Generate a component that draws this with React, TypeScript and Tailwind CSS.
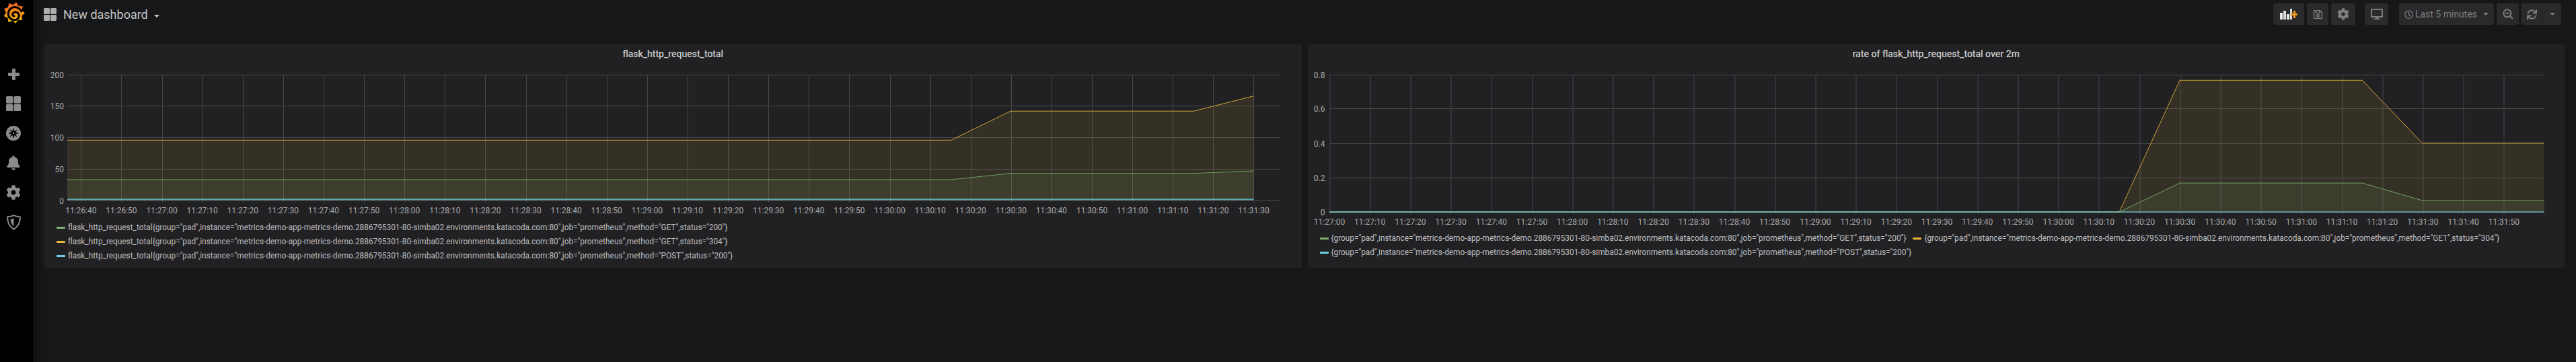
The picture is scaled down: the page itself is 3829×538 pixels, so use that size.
import React from "react";
import { FaBell, FaCog, FaDesktop, FaRegClock, FaRegSave, FaSync } from "react-icons/fa";

const pad = (n: number) => String(n).padStart(2, "0");
const timeLabel = (start: number, i: number) => {
  const s = start + i * 10;
  return `11:${pad(Math.floor(s / 60))}:${pad(s % 60)}`;
};

const pts = (a: number[][]) => a.map((p) => p.join(",")).join(" ");

function Chart({
  ox, x0, x1, width, height, tickStart, tickStep, tickCount, startSec, yTicks, series, yLabelX,
}: {
  ox: number; x0: number; x1: number; width: number; height: number; tickStart: number; tickStep: number;
  tickCount: number; startSec: number; yTicks: [string, number][]; yLabelX: number;
  series: { color: string; pts: number[][]; base: number; sw?: number; op?: number }[];
}) {
  const top = yTicks[0][1];
  const bottom = yTicks[yTicks.length - 1][1];
  return (
    <svg className="block shrink-0" width={width} height={height}>
      <g transform={`translate(${-ox},-94)`}>
        {yTicks.map(([, y]) => (
          <line key={y} x1={x0} x2={x1} y1={y + 0.5} y2={y + 0.5} stroke="#4a4a4c" />
        ))}
        {Array.from({ length: tickCount }).map((_, i) => {
          const x = Math.round(tickStart + i * tickStep) + 0.5;
          return <line key={i} x1={x} x2={x} y1={top} y2={bottom + 3} stroke="#47474a" />;
        })}
        {series.map((s, i) => {
          const last = s.pts[s.pts.length - 1][0];
          const first = s.pts[0][0];
          return (
            <polygon key={i} points={pts([[first, s.base], ...s.pts, [last, s.base]])} fill={s.color} fillOpacity={0.1} />
          );
        })}
        {series.map((s, i) => (
          <polyline key={i} points={pts(s.pts)} fill="none" stroke={s.color} strokeWidth={s.sw ?? 1} strokeOpacity={s.op ?? 0.85} />
        ))}
        {yTicks.map(([t, y]) => (
          <text key={t} x={yLabelX} y={y + 4.5} textAnchor="end" className="text-[12px] fill-[#a9a9aa]">{t}</text>
        ))}
        {Array.from({ length: tickCount }).map((_, i) => (
          <text key={i} x={tickStart + i * tickStep} y={bottom + 19} textAnchor="middle" className="text-[12px] fill-[#a9a9aa]">
            {timeLabel(startSec, i)}
          </text>
        ))}
      </g>
    </svg>
  );
}

const host = `instance="metrics-demo-app-metrics-demo.2886795301-80-simba02.environments.katacoda.com:80",job="prometheus",`;

function Legend({ items }: { items: { color: string; text: string }[] }) {
  return (
    <div className="flex flex-wrap pl-[18px] pr-[10px]">
      {items.map((it, i) => (
        <div key={i} className="flex items-center h-[21px] mr-[10px] text-[11.85px] text-[#bdbdbf] whitespace-nowrap">
          <span className={`block w-[13px] h-[3px] rounded-[1px] mr-[4px] ${it.color}`} />
          {it.text}
        </div>
      ))}
    </div>
  );
}

function Panel({ title, children }: { title: string; children: React.ReactNode }) {
  return (
    <section className="flex-1 min-w-0 h-[332px] bg-[#212124] rounded-[3px] flex flex-col">
      <h2 className="h-[28px] shrink-0 flex items-center justify-center text-[14px] font-medium text-[#c8c9ca]">{title}</h2>
      {children}
    </section>
  );
}

function Logo() {
  const teeth = 9;
  const p: string[] = [];
  for (let i = 0; i < teeth * 2; i++) {
    const a = (i / (teeth * 2)) * Math.PI * 2 - Math.PI / 2.3;
    const r = i % 2 === 0 ? 15.5 : 11.5;
    p.push(`${(16 + r * Math.cos(a)).toFixed(1)},${(16 + r * Math.sin(a)).toFixed(1)}`);
  }
  return (
    <svg width="32" height="32" viewBox="0 0 32 32">
      <defs>
        <linearGradient id="gf" x1="0" y1="0" x2="0" y2="1">
          <stop offset="0" stopColor="#ee5a24" />
          <stop offset="1" stopColor="#fcc50f" />
        </linearGradient>
      </defs>
      <polygon points={p.join(" ")} fill="url(#gf)" strokeLinejoin="round" stroke="url(#gf)" strokeWidth="1" />
      <path d="M27 14C24 8 17 6 12 9c-5 3-6 10-3 14 3 4 9 5 12 2 3-2 3-7 0-9-2-2-6-1-7 1-1 2 0 4 2 4" fill="none" stroke="#000" strokeWidth="3" strokeLinecap="round" />
    </svg>
  );
}

function Grid4({ size }: { size: number }) {
  return (
    <svg width={size} height={size} viewBox="0 0 22 22" fill="currentColor">
      <rect x="0" y="0" width="10.4" height="10.4" rx="1.6" />
      <rect x="11.6" y="0" width="10.4" height="10.4" rx="1.6" />
      <rect x="0" y="11.6" width="10.4" height="10.4" rx="1.6" />
      <rect x="11.6" y="11.6" width="10.4" height="10.4" rx="1.6" />
    </svg>
  );
}

function Plus() {
  return (
    <svg width="17" height="17" viewBox="0 0 17 17" fill="currentColor">
      <rect x="6" y="0" width="5" height="17" rx="1.2" />
      <rect x="0" y="6" width="17" height="5" rx="1.2" />
    </svg>
  );
}

function Compass() {
  return (
    <svg width="22" height="22" viewBox="0 0 22 22">
      <circle cx="11" cy="11" r="11" fill="currentColor" />
      <path d="M11 3 12.6 8 17 5 14 9.4 19 11 14 12.6 17 17 12.6 14 11 19 9.4 14 5 17 8 12.6 3 11 8 9.4 5 5 9.4 8Z" fill="#000" />
      <circle cx="11" cy="11" r="1.2" fill="currentColor" />
    </svg>
  );
}

function Shield() {
  return (
    <svg width="21" height="23" viewBox="0 0 21 23">
      <path d="M10.5 1.2C7.5 2.6 4.5 3.2 1.3 3.2c-.5 7.500 2.500 14.500 9.200 18.600 6.700-4.100 9.700-11.100 9.200-18.600-3.200 0-6.200-.6-9.200-2Z" fill="none" stroke="currentColor" strokeWidth="2" />
      <path d="M10.500 5v12.500c-3-2.500-4.800-6.500-5-10.500 1.800-.2 3.400-.9 5-2Z" fill="currentColor" />
    </svg>
  );
}

function AddPanel() {
  return (
    <svg width="26" height="16" viewBox="0 0 26 16">
      <rect x="0" y="6" width="4" height="10" fill="#e8e8e8" />
      <rect x="5" y="3" width="4" height="13" fill="#d8d8d8" />
      <rect x="10" y="8" width="4" height="8" fill="#e8e8e8" />
      <rect x="15" y="0" width="3" height="16" fill="#d8d8d8" />
      <path d="M20 3h3v4h3v3h-3v4h-3v-4h-4V7h4Z" fill="#f29a1f" />
    </svg>
  );
}

function ZoomOut() {
  return (
    <svg width="16" height="16" viewBox="0 0 16 16" fill="none" stroke="currentColor" strokeWidth="2">
      <circle cx="6.800" cy="6.800" r="5.500" />
      <path d="M4.300 6.800h5M10.800 10.800 15 15" />
    </svg>
  );
}

const Caret = ({ cls }: { cls: string }) => (
  <span className={`block w-0 h-0 border-l-[4px] border-r-[4px] border-t-[4px] border-l-transparent border-r-transparent ${cls}`} />
);

const Btn = ({ cls, children }: { cls: string; children: React.ReactNode }) => (
  <div className={`h-[32px] rounded-[3px] bg-[#2a2a2c] text-[#7e7e7f] flex items-center justify-center ${cls}`}>{children}</div>
);

export default function App() {
  const orange = "#eab839";
  const green = "#7eb26d";
  const blue = "#6ed0e0";

  const ticks1: [string, number][] = [["200", 111], ["150", 157], ["100", 204], ["50", 251], ["0", 298]];
  const ticks2: [string, number][] = [["0.8", 111], ["0.6", 161], ["0.4", 213], ["0.2", 264], ["0", 315]];

  return (
    <div className="relative flex w-[3829px] h-[538px] overflow-hidden bg-[#161719] font-[Roboto,sans-serif]">
      <aside className="w-[49px] shrink-0 bg-black text-[#8c8c8c] flex flex-col items-center">
        <div className="h-[38px] mt-[3px] flex items-start justify-center -ml-[8px]"><Logo /></div>
        <nav className="mt-[47px] flex flex-col items-center -ml-[9px]">
          <div className="h-[44px] flex items-center justify-center"><Plus /></div>
          <div className="h-[44px] flex items-center justify-center"><Grid4 size={22} /></div>
          <div className="h-[44px] flex items-center justify-center"><Compass /></div>
          <div className="h-[44px] flex items-center justify-center"><FaBell size={22} /></div>
          <div className="h-[44px] flex items-center justify-center"><FaCog size={22} /></div>
          <div className="h-[44px] flex items-center justify-center"><Shield /></div>
        </nav>
      </aside>
      <div className="absolute left-[49px] top-0 w-[14px] h-full bg-linear-to-r from-[#0f1012] to-transparent" />
      <main className="relative flex-1 min-w-0 flex flex-col">
        <header className="h-[66px] shrink-0 flex items-start pl-[16px] pr-[22px] pt-[5px]">
          <div className="flex items-center h-[32px] text-[#adadae]">
            <Grid4 size={19} />
            <span className="ml-[10px] text-[18px] text-[#c4c5c6]">New dashboard</span>
            <Caret cls="ml-[9px] mt-[5px] border-t-[#c4c5c6] border-l-[3px] border-r-[3px]" />
          </div>
          <div className="ml-auto flex items-center">
            <Btn cls="w-[46px]"><AddPanel /></Btn>
            <Btn cls="w-[32px] ml-[4px]"><FaRegSave size={15} /></Btn>
            <Btn cls="w-[36px] ml-[4px]"><FaCog size={18} /></Btn>
            <Btn cls="w-[35px] ml-[14px]"><FaDesktop size={18} /></Btn>
            <Btn cls="w-[141px] ml-[16px] text-[14px]">
              <FaRegClock size={13} className="mt-[1px]" />
              <span className="ml-[3px]">Last 5 minutes</span>
              <Caret cls="ml-[9px] border-t-[#7e7e7f]" />
            </Btn>
            <Btn cls="w-[33px] ml-[4px]"><ZoomOut /></Btn>
            <Btn cls="w-[59px] ml-[4px]">
              <div className="w-[32px] h-full flex items-center justify-center border-r border-[#232325]"><FaSync size={15} /></div>
              <div className="w-[27px] flex items-center justify-center"><Caret cls="border-t-[#7e7e7f]" /></div>
            </Btn>
          </div>
        </header>
        <div className="flex gap-[9px] pl-[17px] pr-[17px]">
          <Panel title="flask_http_request_total">
            <Chart
              ox={66} x0={100} x1={1903} width={1868} height={234}
              tickStart={120.3} tickStep={60.11} tickCount={30} startSec={26 * 60 + 40} yLabelX={95}
              yTicks={ticks1}
              series={[
                { color: orange, base: 298, pts: [[100, 208.3], [1413.8, 208.3], [1502, 165.2], [1774, 165.2], [1863.4, 142.7]] },
                { color: green, base: 298, pts: [[100, 267], [1413.8, 267], [1502, 257.7], [1774, 257.7], [1863.4, 254]] },
                { color: blue, base: 298, sw: 2, op: 0.7, pts: [[100, 296.3], [1863.4, 296.3]] },
              ]}
            />
            <Legend items={[
              { color: "bg-[#7eb26d]", text: `flask_http_request_total{group="pad",${host}method="GET",status="200"}` },
              { color: "bg-[#eab839]", text: `flask_http_request_total{group="pad",${host}method="GET",status="304"}` },
              { color: "bg-[#6ed0e0]", text: `flask_http_request_total{group="pad",${host}method="POST",status="200"}` },
            ]} />
          </Panel>
          <Panel title="rate of flask_http_request_total over 2m">
            <Chart
              ox={1943.5} x0={1975.5} x1={3781} width={1868} height={250}
              tickStart={1975.5} tickStep={60.2} tickCount={30} startSec={27 * 60} yLabelX={1969}
              yTicks={ticks2}
              series={[
                { color: orange, base: 315, pts: [[1975.5, 315], [3149.7, 315], [3239.6, 119.3], [3510.8, 119.3], [3600, 212.7], [3781, 212.7]] },
                { color: green, base: 315, pts: [[1975.5, 315], [3149.7, 315], [3239.6, 272], [3510.8, 272], [3600, 298], [3781, 298]] },
                { color: blue, base: 315, sw: 2, op: 0.6, pts: [[1975.5, 315], [3781, 315]] },
              ]}
            />
            <Legend items={[
              { color: "bg-[#7eb26d]", text: `{group="pad",${host}method="GET",status="200"}` },
              { color: "bg-[#eab839]", text: `{group="pad",${host}method="GET",status="304"}` },
              { color: "bg-[#6ed0e0]", text: `{group="pad",${host}method="POST",status="200"}` },
            ]} />
          </Panel>
        </div>
      </main>
    </div>
  );
}
